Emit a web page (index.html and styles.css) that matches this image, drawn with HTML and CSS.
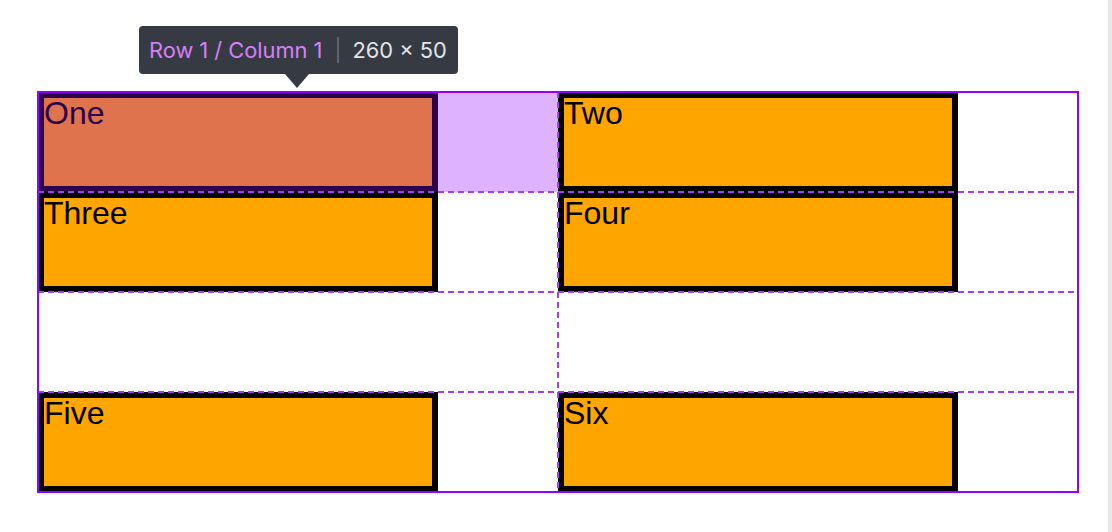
FILE: index.html
```html
<!DOCTYPE html>
<html lang="en">
<head>
    <meta charset="UTF-8">
    <meta name="viewport" content="width=device-width, initial-scale=1.0">
    <title>Grid inspector</title>
    <link rel="stylesheet" href="styles.css">
</head>
<body>
    <div class="page">
        <div class="grid">
            <div class="item item-one">One</div>
            <div class="item item-two">Two</div>
            <div class="item item-three">Three</div>
            <div class="item item-four">Four</div>
            <div class="item item-five">Five</div>
            <div class="item item-six">Six</div>

            <!-- devtools grid overlay -->
            <svg class="grid-overlay" width="1042" height="403" viewBox="-1 -1 1042 403">
                <rect x="0" y="1" width="520" height="99" fill="rgba(146, 0, 255, 0.3)"/>
                <line x1="520" y1="0" x2="520" y2="400" stroke="#a43cf2" stroke-width="2" stroke-dasharray="6 4"/>
                <line x1="0" y1="100" x2="1040" y2="100" stroke="#a43cf2" stroke-width="2" stroke-dasharray="6 4"/>
                <line x1="0" y1="200" x2="1040" y2="200" stroke="#a43cf2" stroke-width="2" stroke-dasharray="6 4"/>
                <line x1="0" y1="300" x2="1040" y2="300" stroke="#a43cf2" stroke-width="2" stroke-dasharray="6 4"/>
                <rect x="0" y="0" width="1040" height="400" fill="none" stroke="#9400ff" stroke-width="2"/>
            </svg>
        </div>

        <div class="tooltip">
            <span class="tooltip-area">Row 1 / Column 1</span>
            <span class="tooltip-sep"></span>
            <span class="tooltip-size">260 × 50</span>
        </div>
    </div>
    <div class="scrollbar"></div>
</body>
</html>
```

FILE: styles.css
```css
body {
    margin: 0;
    background: #fff;
    font-family: "Liberation Sans", Arial, sans-serif;
}
.page {
    position: relative;
    padding: 92px 0 0 38px;
    height: 440px;
}
.grid {
    position: relative;
    display: grid;
    grid-template-columns: 520px 520px;
    grid-template-rows: repeat(4, 100px);
    width: 1040px;
}
.item {
    box-sizing: border-box;
    width: 400px;
    height: 100px;
    border: 6px solid #000;
    background-color: #ffa500;
    color: #000;
    font-size: 32px;
    line-height: 30px;
}
.item-one { grid-row: 1; grid-column: 1; }
.item-two { grid-row: 1; grid-column: 2; }
.item-three { grid-row: 2; grid-column: 1; }
.item-four { grid-row: 2; grid-column: 2; }
.item-five { grid-row: 4; grid-column: 1; }
.item-six { grid-row: 4; grid-column: 2; }

.grid-overlay {
    position: absolute;
    left: -1px;
    top: -1px;
    pointer-events: none;
}

.tooltip {
    position: absolute;
    left: 139px;
    top: 26px;
    height: 48px;
    display: flex;
    align-items: center;
    padding: 0 11px 0 10px;
    background: #353a43;
    border-radius: 4px;
    font-family: Inter, "Noto Sans", sans-serif;
    font-size: 21.8px;
}
.tooltip::after {
    content: "";
    position: absolute;
    left: 146px;
    bottom: -14px;
    border-left: 12px solid transparent;
    border-right: 12px solid transparent;
    border-top: 14px solid #353a43;
}
.tooltip-area {
    color: #d77ff5;
}
.tooltip-sep {
    width: 2px;
    height: 26px;
    margin: 0 13px 0 15px;
    background: #5f646c;
}
.tooltip-size {
    color: #e3e5e8;
}

.scrollbar {
    position: fixed;
    top: 0;
    right: 0;
    width: 4px;
    height: 100%;
    background: #e8e8e8;
}
```
